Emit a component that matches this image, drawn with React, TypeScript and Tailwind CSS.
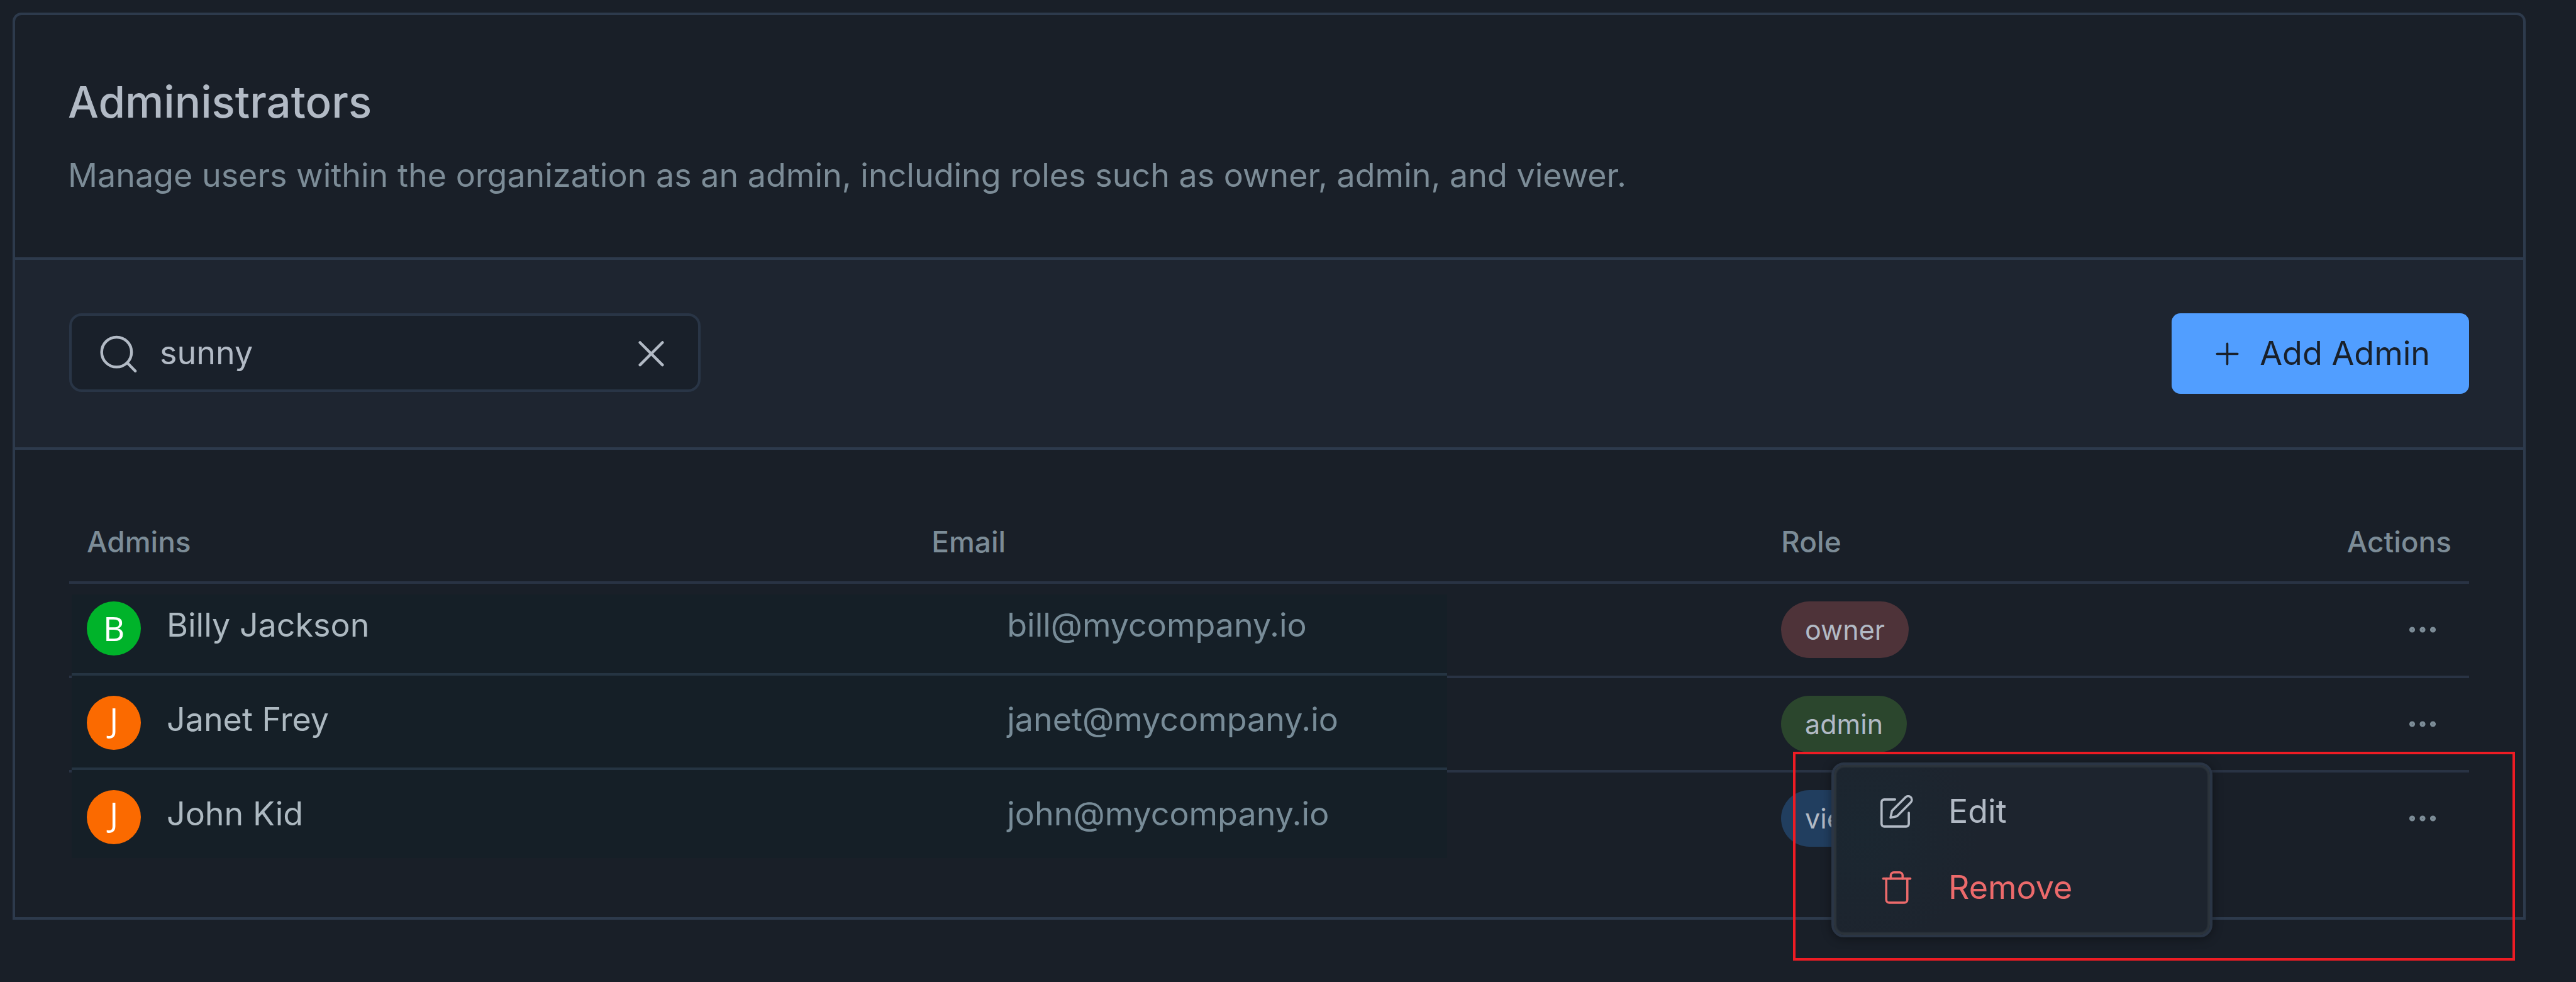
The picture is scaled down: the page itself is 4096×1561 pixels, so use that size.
import { useState } from "react";

type Role = "owner" | "admin" | "viewer";

type Admin = {
  name: string;
  email: string;
  role: Role;
  avatar: string;
};

const ADMINS: Admin[] = [
  { name: "Billy Jackson", email: "bill@mycompany.io", role: "owner", avatar: "bg-[#00b32a]" },
  { name: "Janet Frey", email: "janet@mycompany.io", role: "admin", avatar: "bg-[#fb6a00] pb-[11px]" },
  { name: "John Kid", email: "john@mycompany.io", role: "viewer", avatar: "bg-[#fb6a00] pb-[11px]" },
];

const ROLE_STYLE: Record<Role, string> = {
  owner: "bg-[#4e3339]",
  admin: "bg-[#2b462d]",
  viewer: "bg-[#213e5f]",
};

function SearchIcon() {
  return (
    <svg className="h-[62px] w-[59px] shrink-0" viewBox="0 -4 66 70" fill="none" stroke="currentColor" strokeWidth="5" strokeLinecap="round" aria-hidden="true">
      <circle cx="29.5" cy="29.5" r="26.8" />
      <path d="M49 49L63 63.5" />
    </svg>
  );
}

function CloseIcon() {
  return (
    <svg className="h-[45px] w-[41px]" viewBox="0 -4 46 50" fill="none" stroke="currentColor" strokeWidth="5" strokeLinecap="round" aria-hidden="true">
      <path d="M3 3L43 43M43 3L3 43" />
    </svg>
  );
}

function PlusIcon() {
  return (
    <svg className="size-[37px] shrink-0" viewBox="0 0 42 42" fill="none" stroke="currentColor" strokeWidth="4" strokeLinecap="round" aria-hidden="true">
      <path d="M21 2.5V39.5M2.5 21H39.5" />
    </svg>
  );
}

function DotsIcon() {
  return (
    <svg className="h-3 w-[46px]" viewBox="0 0 46 12" fill="none" stroke="currentColor" strokeWidth="4" aria-hidden="true">
      <circle cx="6.5" cy="6" r="2.6" />
      <circle cx="23" cy="6" r="2.6" />
      <circle cx="39.5" cy="6" r="2.6" />
    </svg>
  );
}

function EditIcon() {
  return (
    <svg className="size-[52px] shrink-0" viewBox="0 0 174 174" fill="none" stroke="currentColor" strokeWidth="12" strokeLinecap="round" strokeLinejoin="round" aria-hidden="true">
      <path d="M78 23H20a14 14 0 0 0-14 14v116a14 14 0 0 0 14 14h117a14 14 0 0 0 14-14V94" />
      <path d="M61 84L133.7 11.2A19.5 19.5 0 0 1 161.3 38.8L88 112L54 120Z" />
    </svg>
  );
}

function TrashIcon() {
  return (
    <svg className="size-[52px] shrink-0" viewBox="-9 0 174 174" fill="none" stroke="currentColor" strokeWidth="12" strokeLinecap="round" strokeLinejoin="round" aria-hidden="true">
      <path d="M6 39H150" />
      <path d="M46 39V22a16 16 0 0 1 16-16h31a16 16 0 0 1 16 16V39" />
      <path d="M22 39V151a16 16 0 0 0 16 16h80a16 16 0 0 0 16-16V39" />
    </svg>
  );
}

function RowMenu() {
  return (
    <>
      <div
        className="pointer-events-none absolute right-[13px] bottom-[-69px] z-20 h-[332px] w-[1148px] border-4 border-[#ee1c24]"
        aria-hidden="true"
      />
      <div
        role="menu"
        className="absolute right-[494px] bottom-[-32px] z-30 w-[606px] rounded-[20px] border-4 border-[#2a3545] bg-[#1d242e] bg-[radial-gradient(circle_at_8%_40%,#1b2731_0%,#1d242e_32%)] pt-[13px] pb-[15px] text-[52px] leading-[60px] shadow-[inset_0_0_2px_4px_#2c343c,0_2px_16px_rgba(0,0,0,0.4)]"
      >
        <button role="menuitem" type="button" className="flex h-[121px] w-full items-center gap-14 pl-[74px] text-[#b2bac5]">
          <EditIcon />
          Edit
        </button>
        <button role="menuitem" type="button" className="flex h-[121px] w-full items-center gap-14 pl-[74px] text-[#ec6a6b]">
          <TrashIcon />
          Remove
        </button>
      </div>
    </>
  );
}

export default function App() {
  const [query, setQuery] = useState("sunny");

  return (
    <main className="min-h-screen bg-[#191f28] pt-5 pr-20 pb-[98px] pl-5 font-['Inter',sans-serif] text-[#b2bac5]">
      <div className="rounded-t-[14px] border-4 border-[#2d3a4c]">
        <header className="flex flex-col gap-[35px] border-b-4 border-[#2d3a4c] px-[84px] pt-[94px] pb-[92px]">
          <h1 className="text-[69px] leading-[88px] font-medium">Administrators</h1>
          <p className="text-[52px] leading-[76px] text-[#7c8c97]">
            Manage users within the organization as an admin, including roles such as owner, admin, and viewer.
          </p>
        </header>

        <div className="flex items-start justify-between border-b-4 border-[#2d3a4c] bg-[#1e2530] px-[86px] py-[85px]">
          <div className="flex h-[125px] w-[1004px] items-center gap-9 rounded-[20px] border-4 border-[#293546] bg-[#19202a] pr-[54px] pl-[45px]">
            <SearchIcon />
            <input
              type="text"
              aria-label="Search admins"
              value={query}
              onChange={(e) => setQuery(e.target.value)}
              className="min-w-0 flex-1 bg-transparent text-[52px] leading-[60px] outline-none"
            />
            <button type="button" aria-label="Clear search" onClick={() => setQuery("")}>
              <CloseIcon />
            </button>
          </div>
          <button
            type="button"
            className="flex h-32 items-center gap-[33px] rounded-[14px] bg-[#519eff] pr-[62px] pl-[70px] text-[52px] leading-[60px] text-[#19202a]"
          >
            <PlusIcon />
            Add Admin
          </button>
        </div>

        <section className="relative px-[86px] py-[84px]">
          <div className="relative">
            <table className="w-full table-fixed border-separate border-spacing-0 text-left">
              <thead>
                <tr className="text-[46px] leading-[60px] text-[#7c8c97] [&>th]:border-b-4 [&>th]:border-[#293344] [&>th]:px-7 [&>th]:pt-8 [&>th]:pb-[33px] [&>th]:font-medium">
                  <th scope="col" className="w-[35.2%]">Admins</th>
                  <th scope="col" className="w-[35.4%]">Email</th>
                  <th scope="col">Role</th>
                  <th scope="col" className="text-right">Actions</th>
                </tr>
              </thead>
              <tbody className="[&>tr:last-child>td]:border-b-0">
                {ADMINS.map((a) => (
                  <tr key={a.email} className="[&>td]:border-b-4 [&>td]:border-[#293344] [&>td]:px-7 [&>td]:py-7 [&>td]:align-top">
                    <td>
                      <div className="relative z-10 flex gap-[41px]">
                        <span className={`flex size-[86px] items-center justify-center rounded-full font-['Open_Sans',sans-serif] text-[53px] leading-[60px] text-white ${a.avatar}`}>
                          {a.name[0]}
                        </span>
                        <span className="pt-2 text-[52px] leading-[60px] text-[#adb9c1]">{a.name}</span>
                      </div>
                    </td>
                    <td>
                      <span className="relative z-10 block pt-2 pl-[120px] text-[52px] leading-[60px] text-[#788c98]">{a.email}</span>
                    </td>
                    <td>
                      <span className={`flex h-[90px] w-fit items-center rounded-full px-[38px] text-[43px] leading-[60px] ${ROLE_STYLE[a.role]}`}>
                        {a.role}
                      </span>
                    </td>
                    <td>
                      <button type="button" aria-label={`Actions for ${a.name}`} className="ml-auto flex h-[90px] w-[93px] items-center justify-center text-[#7c8c97]">
                        <DotsIcon />
                      </button>
                    </td>
                  </tr>
                ))}
              </tbody>
            </table>

            {/* Tinted panel behind names and emails, with its own row dividers */}
            <div className="absolute top-[146px] left-1 w-[57.3%] bg-[#151f27]" aria-hidden="true">
              <div className="h-[129px] border-b-4 border-[#253442]" />
              <div className="h-[150px] border-b-4 border-[#253442]" />
              <div className="h-[140px]" />
            </div>
          </div>
          <RowMenu />
        </section>
      </div>
    </main>
  );
}
